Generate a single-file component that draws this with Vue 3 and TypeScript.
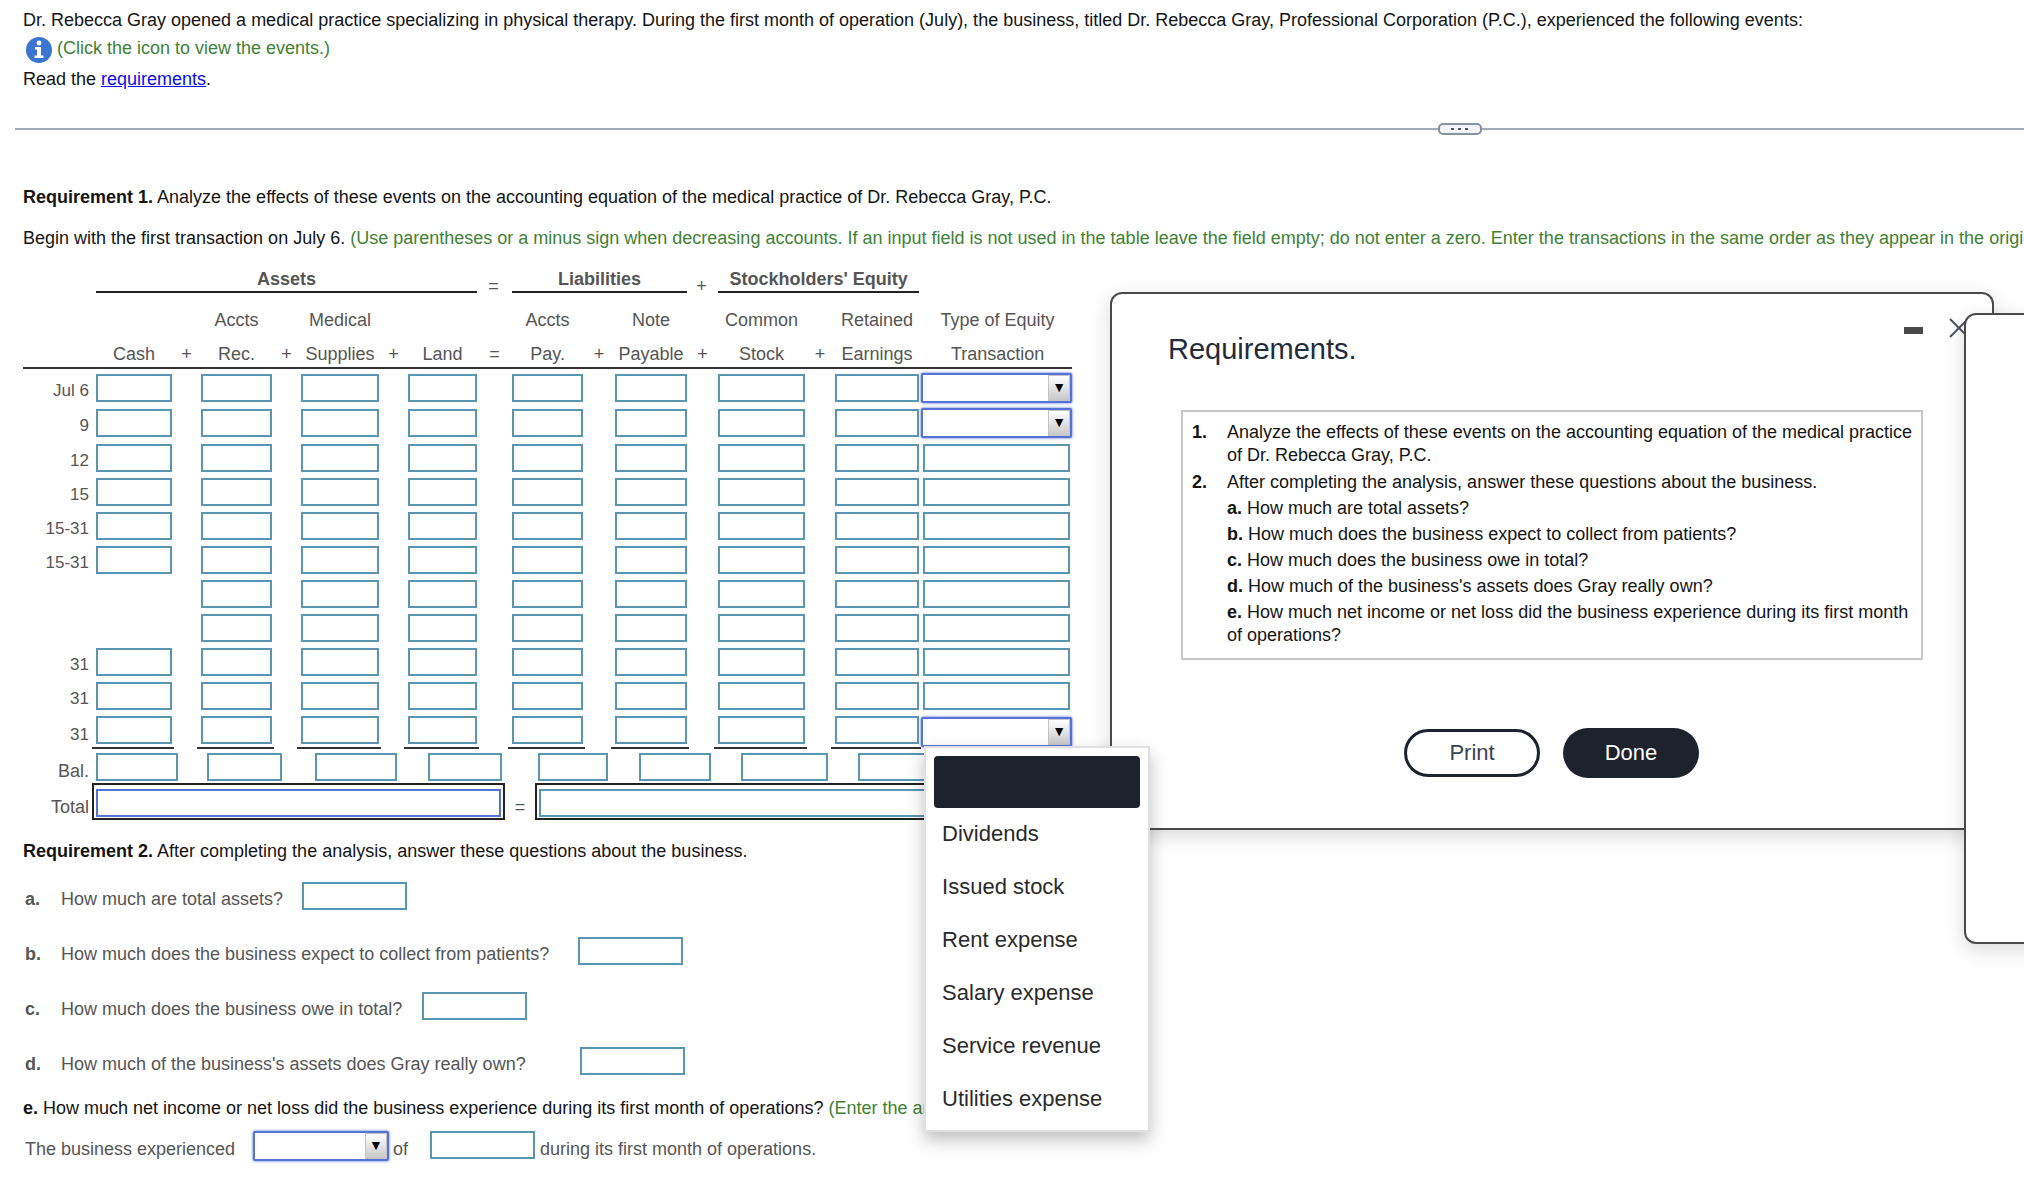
<script setup lang="ts">
import { ref } from 'vue'

interface Account {
  key: string
  top: string
  bottom: string
  op: string
}

interface Entry {
  label: string
  cash: boolean
  pick: boolean
}

interface Question {
  id: string
  text: string
}

const accounts: Account[] = [
  { key: 'cash', top: '', bottom: 'Cash', op: '+' },
  { key: 'rec', top: 'Accts', bottom: 'Rec.', op: '+' },
  { key: 'supplies', top: 'Medical', bottom: 'Supplies', op: '+' },
  { key: 'land', top: '', bottom: 'Land', op: '=' },
  { key: 'pay', top: 'Accts', bottom: 'Pay.', op: '+' },
  { key: 'note', top: 'Note', bottom: 'Payable', op: '+' },
  { key: 'stock', top: 'Common', bottom: 'Stock', op: '+' },
  { key: 'earnings', top: 'Retained', bottom: 'Earnings', op: '' },
]

const entries: Entry[] = [
  { label: 'Jul 6', cash: true, pick: true },
  { label: '9', cash: true, pick: true },
  { label: '12', cash: true, pick: false },
  { label: '15', cash: true, pick: false },
  { label: '15-31', cash: true, pick: false },
  { label: '15-31', cash: true, pick: false },
  { label: '', cash: false, pick: false },
  { label: '', cash: false, pick: false },
  { label: '31', cash: true, pick: false },
  { label: '31', cash: true, pick: false },
  { label: '31', cash: true, pick: true },
]

const options: string[] = [
  '',
  'Dividends',
  'Issued stock',
  'Rent expense',
  'Salary expense',
  'Service revenue',
  'Utilities expense',
]

const questions: Question[] = [
  { id: 'a', text: 'How much are total assets?' },
  { id: 'b', text: 'How much does the business expect to collect from patients?' },
  { id: 'c', text: 'How much does the business owe in total?' },
  { id: 'd', text: "How much of the business's assets does Gray really own?" },
]

const lastRow = entries.length - 1
const openRow = ref<number | null>(lastRow)
const chosen = ref<string[]>(entries.map(() => ''))

function choose(row: number, option: string): void {
  chosen.value[row] = option
  openRow.value = null
}
</script>

<template>
  <main class="page">
    <section class="intro">
      <p>
        Dr. Rebecca Gray opened a medical practice specializing in physical therapy. During the first month of operation (July), the business, titled Dr. Rebecca Gray, Professional Corporation (P.C.), experienced the following events:
      </p>
      <div class="events">
        <button type="button" class="info" aria-label="View the events">
          <svg viewBox="0 0 26 26" width="26" height="26" aria-hidden="true">
            <circle cx="13" cy="13" r="13" fill="#3b74d1" />
            <circle cx="13" cy="6" r="2.4" fill="#fff" />
            <path d="M9 10h6v8.500h2.500v2.500H8.500v-2.500H11v-6H9z" fill="#fff" />
          </svg>
        </button>
        <span class="green">(Click the icon to view the events.)</span>
      </div>
      <p class="read">Read the <a href="#requirements">requirements</a>.</p>
    </section>

    <div class="divider">
      <span class="rule rule-left"></span>
      <button type="button" class="handle" aria-label="Resize"><i></i><i></i><i></i></button>
      <span class="rule rule-right"></span>
    </div>

    <section class="work">
      <p><b>Requirement 1.</b> Analyze the effects of these events on the accounting equation of the medical practice of Dr. Rebecca Gray, P.C.</p>
      <p class="begin">
        Begin with the first transaction on July 6. <span class="green">(Use parentheses or a minus sign when decreasing accounts. If an input field is not used in the table leave the field empty; do not enter a zero. Enter the transactions in the same order as they appear in the original</span>
      </p>

      <table class="ledger">
        <colgroup>
          <col class="w-label" />
          <col class="w-cash" /><col class="w-op1" />
          <col class="w-rec" /><col class="w-op1" />
          <col class="w-supplies" /><col class="w-op1" />
          <col class="w-land" /><col class="w-op2" />
          <col class="w-pay" /><col class="w-op3" />
          <col class="w-note" /><col class="w-op4" />
          <col class="w-stock" /><col class="w-op5" />
          <col class="w-earnings" />
          <col class="w-type" />
        </colgroup>
        <thead>
          <tr class="groups">
            <td></td>
            <th colspan="7"><span>Assets</span></th>
            <td class="op">=</td>
            <th colspan="3"><span>Liabilities</span></th>
            <td class="op">+</td>
            <th colspan="3"><span>Stockholders' Equity</span></th>
            <td></td>
          </tr>
          <tr class="upper">
            <td></td>
            <template v-for="a in accounts" :key="a.key">
              <td>{{ a.top }}</td>
              <td v-if="a.key !== 'earnings'"></td>
            </template>
            <td>Type of Equity</td>
          </tr>
          <tr class="lower">
            <td></td>
            <template v-for="a in accounts" :key="a.key">
              <th scope="col">{{ a.bottom }}</th>
              <td v-if="a.op">{{ a.op }}</td>
            </template>
            <th scope="col">Transaction</th>
          </tr>
        </thead>
        <tbody>
          <tr v-for="(row, r) in entries" :key="r" :class="{ tall: row.pick, last: r === lastRow }">
            <th scope="row">{{ row.label }}</th>
            <template v-for="a in accounts" :key="a.key">
              <td class="amount">
                <input v-if="a.key !== 'cash' || row.cash" type="text" :aria-label="`${row.label} ${a.top} ${a.bottom}`" />
              </td>
              <td v-if="a.key !== 'earnings'"></td>
            </template>
            <td v-if="row.pick" class="type picked">
              <div class="pick">
                <select v-model="chosen[r]" :aria-label="`${row.label} type of equity transaction`" @mousedown.prevent="openRow = openRow === r ? null : r">
                  <option v-for="o in options" :key="o" :value="o">{{ o }}</option>
                </select>
                <span class="arrow" aria-hidden="true">▼</span>
                <ul v-if="openRow === r" class="menu" role="listbox" aria-label="Type of equity transaction">
                  <li
                    v-for="o in options"
                    :key="o"
                    role="option"
                    :class="{ current: o === chosen[r] }"
                    :aria-selected="o === chosen[r]"
                    @click="choose(r, o)"
                  >{{ o }}</li>
                </ul>
              </div>
            </td>
            <td v-else class="type"><input type="text" :aria-label="`${row.label} type of equity transaction`" /></td>
          </tr>
        </tbody>
      </table>

      <table class="sums">
        <colgroup>
          <col class="w-label" />
          <col class="s-cash" /><col class="s-gap1" />
          <col class="s-rec" /><col class="s-gap2" />
          <col class="s-supplies" /><col class="s-gap3" />
          <col class="s-land" /><col class="s-gap4" />
          <col class="s-pay" /><col class="s-gap3" />
          <col class="s-note" /><col class="s-gap4" />
          <col class="s-stock" /><col class="s-gap4" />
          <col class="s-earnings" />
        </colgroup>
        <tbody>
          <tr class="balance">
            <th scope="row">Bal.</th>
            <template v-for="a in accounts" :key="a.key">
              <td :class="a.key"><input type="text" :aria-label="`Balance ${a.top} ${a.bottom}`" /></td>
              <td v-if="a.key !== 'earnings'"></td>
            </template>
          </tr>
          <tr class="total">
            <th scope="row">Total</th>
            <td colspan="7" class="framed"><input type="text" class="active" aria-label="Total assets" /></td>
            <td class="op">=</td>
            <td colspan="7" class="framed"><input type="text" aria-label="Total liabilities and stockholders' equity" /></td>
          </tr>
        </tbody>
      </table>

      <p class="second"><b>Requirement 2.</b> After completing the analysis, answer these questions about the business.</p>

      <div class="questions">
        <div v-for="q in questions" :key="q.id" class="question">
          <b>{{ q.id }}.</b>
          <label :for="`q-${q.id}`" :class="`q-${q.id}`">{{ q.text }}</label>
          <input :id="`q-${q.id}`" type="text" />
        </div>
      </div>

      <p class="income">
        <b>e.</b> How much net income or net loss did the business experience during its first month of operations? <span class="green">(Enter the amount</span>
      </p>
      <div class="sentence">
        <label for="result">The business experienced</label>
        <div class="pick short">
          <select id="result">
            <option value=""></option>
            <option value="income">net income</option>
            <option value="loss">net loss</option>
          </select>
          <span class="arrow" aria-hidden="true">▼</span>
        </div>
        <label for="result-amount" class="of">of</label>
        <input id="result-amount" type="text" />
        <span class="during">during its first month of operations.</span>
      </div>
    </section>

    <section id="requirements" class="dialog requirements" role="dialog" aria-labelledby="req-title">
      <header>
        <h2 id="req-title">Requirements.</h2>
        <div class="controls">
          <button type="button" class="minimize" aria-label="Minimize"><i></i></button>
          <button type="button" class="close" aria-label="Close">
            <svg viewBox="0 0 20 20" width="20" height="20" aria-hidden="true">
              <path d="M1 1L19 19M19 1L1 19" stroke="#4a5460" stroke-width="2" fill="none" />
            </svg>
          </button>
        </div>
      </header>
      <div class="sheet">
        <b>1.</b>
        <p>Analyze the effects of these events on the accounting equation of the medical practice<br />of Dr. Rebecca Gray, P.C.</p>
        <b>2.</b>
        <div class="parts">
          <p>After completing the analysis, answer these questions about the business.</p>
          <p v-for="q in questions" :key="q.id"><b>{{ q.id }}.</b> {{ q.text }}</p>
          <p><b>e.</b> How much net income or net loss did the business experience during its first month<br />of operations?</p>
        </div>
      </div>
      <footer>
        <button type="button" class="print">Print</button>
        <button type="button" class="done">Done</button>
      </footer>
    </section>

    <section class="dialog behind" role="dialog" aria-label="Events"></section>
  </main>
</template>

<style>
body {
  margin: 0;
  background: #fff;
}
</style>

<style scoped>
.page {
  position: relative;
  box-sizing: border-box;
  min-height: 100vh;
  padding-top: 8px;
  overflow: hidden;
  font-family: "Liberation Sans", Arial, sans-serif;
  font-size: 18px;
  line-height: 24px;
  color: #141414;
}

p {
  margin: 0;
  white-space: nowrap;
}

button {
  padding: 0;
  border: 0;
  background: none;
  font: inherit;
}

input,
select {
  box-sizing: border-box;
  margin: 0;
  font: inherit;
}

input {
  display: block;
  width: 100%;
  height: 28px;
  padding: 0 4px;
  border: 2px solid #5a95b1;
  border-radius: 0;
  background: #fff;
  outline: 0;
}

.green {
  color: #3f8135;
}

.intro,
.work {
  padding-left: 23px;
}

.events {
  display: flex;
  align-items: flex-start;
  gap: 5px;
  height: 28px;
  margin-top: 4px;
  padding-left: 3px;
}

.info {
  align-self: center;
  width: 26px;
  height: 26px;
}

.info svg {
  display: block;
}

.read {
  margin-top: 3px;
}

.read a {
  color: #0c0cee;
}

.divider {
  display: flex;
  align-items: center;
  margin-top: 32px;
  padding-left: 15px;
}

.rule {
  height: 2px;
  background: #a3a9b8;
}

.rule-left {
  flex: 21;
}

.rule-right {
  flex: 8;
}

.handle {
  display: flex;
  align-items: center;
  justify-content: center;
  gap: 4px;
  box-sizing: border-box;
  width: 44px;
  height: 12px;
  border: 2px solid #8791a0;
  border-radius: 5px;
  background: #f3f4f7;
}

.handle i {
  width: 3px;
  height: 2px;
  background: #4a5462;
}

.work {
  padding-top: 50px;
}

.begin {
  margin: 17px 0;
}

table {
  border-spacing: 0;
  table-layout: fixed;
  color: #555;
}

th,
td {
  padding: 0;
  font-weight: normal;
  vertical-align: top;
  white-space: nowrap;
}

.ledger {
  width: 1049px;
}

.w-label { width: 69px; }
.w-cash { width: 82px; }
.w-rec { width: 77px; }
.w-supplies { width: 84px; }
.w-land { width: 75px; }
.w-pay { width: 77px; }
.w-note { width: 78px; }
.w-stock { width: 93px; }
.w-earnings { width: 90px; }
.w-type { width: 151px; }
.w-op1 { width: 23px; }
.w-op2 { width: 29px; }
.w-op3 { width: 26px; }
.w-op4 { width: 25px; }
.w-op5 { width: 24px; }

thead th,
thead td {
  text-align: center;
}

.groups th {
  padding: 0 2px 0 4px;
}

.groups span {
  display: block;
  border-bottom: 2px solid #222;
  font-weight: bold;
}

.groups .op {
  padding-top: 12px;
  line-height: 14px;
}

.upper td,
.lower th,
.lower td {
  height: 24px;
  padding: 15px 0 6px 2px;
}

.lower th,
.lower td {
  padding: 4px 0 1px 2px;
  border-bottom: 2px solid #333;
}

tbody th {
  padding: 10px 3px 0 0;
  line-height: 24px;
  text-align: right;
}

.ledger tbody th {
  font-size: 17px;
}

.ledger tbody tr {
  height: 34px;
}

.ledger tbody .tall {
  height: 35px;
}

.ledger tbody .last {
  height: 38px;
}

.amount {
  padding: 5px 2px 0 4px;
}

.last .amount {
  border-bottom: 2px solid #333;
}

.last th {
  padding-top: 12px;
}

.type {
  padding: 5px 2px 0;
}

.picked {
  padding: 4px 0 0;
}

.last .picked {
  padding-top: 6px;
}

.pick {
  position: relative;
  height: 30px;
}

.pick select {
  display: block;
  width: 100%;
  height: 30px;
  padding: 0 24px 0 4px;
  border: 2px solid #5672d4;
  border-radius: 2px;
  background: #fff;
  box-shadow: 0 0 3px #4a69d0;
  outline: 0;
  appearance: none;
}

.arrow {
  position: absolute;
  top: 2px;
  right: 2px;
  box-sizing: border-box;
  width: 22px;
  height: 26px;
  border: 1px solid #c4c4c4;
  background: linear-gradient(#fff, #c8c8c8);
  color: #000;
  font-size: 14px;
  line-height: 23px;
  text-align: center;
  pointer-events: none;
}

.menu {
  position: absolute;
  z-index: 5;
  top: 29px;
  left: 3px;
  width: 206px;
  margin: 0;
  padding: 8px 8px 4px;
  border: 2px solid #e0e0e0;
  background: #fff;
  box-shadow: 0 8px 16px rgba(0, 0, 0, 0.25);
  color: #2a2a2a;
  font-size: 22px;
  list-style: none;
}

.menu li {
  height: 53px;
  padding-left: 8px;
  border-radius: 4px;
  line-height: 51px;
  cursor: pointer;
}

.menu .current {
  height: 52px;
  background: #1e222d;
  color: #fff;
}

.sums {
  width: 920px;
}

.s-cash { width: 86px; }
.s-rec { width: 75px; }
.s-supplies { width: 82px; }
.s-land { width: 77px; }
.s-pay { width: 73px; }
.s-note { width: 72px; }
.s-stock { width: 87px; }
.s-earnings { width: 86px; }
.s-gap1 { width: 29px; }
.s-gap2 { width: 33px; }
.s-gap3 { width: 31px; }
.s-gap4 { width: 30px; }

.balance {
  height: 34px;
}

.balance td {
  padding-top: 4px;
}

.balance .cash {
  padding-left: 4px;
}

.balance .land,
.balance .earnings {
  padding-right: 3px;
}

.balance .pay {
  padding-left: 3px;
}

.total {
  height: 37px;
}

.total th,
.total .op {
  padding-top: 12px;
}

.op {
  text-align: center;
}

.framed {
  padding: 4px 2px 1px;
  border: 2px solid #222;
}

.active {
  border-color: #5672d4;
}

.second {
  margin-top: 19px;
}

.questions {
  display: flex;
  flex-direction: column;
  gap: 25px;
  margin-top: 19px;
  padding-left: 2px;
  color: #555;
}

.question {
  display: flex;
  height: 30px;
}

.question b,
.question label {
  padding-top: 5px;
  white-space: nowrap;
}

.question b {
  width: 36px;
}

.q-a { width: 241px; }
.q-b { width: 517px; }
.q-c { width: 361px; }
.q-d { width: 519px; }

.question input,
.sentence input {
  width: 105px;
}

.income {
  margin-top: 19px;
}

.sentence {
  display: flex;
  margin-top: 11px;
  padding-left: 2px;
  color: #555;
}

.sentence label,
.during {
  padding-top: 6px;
  white-space: nowrap;
}

.sentence label {
  width: 228px;
}

.short {
  width: 136px;
}

.sentence .of {
  width: 37px;
  padding-left: 4px;
}

.during {
  padding-left: 5px;
}

.dialog {
  position: absolute;
  box-sizing: border-box;
  border: 2px solid #4a4a4a;
  border-radius: 12px;
  background: #fff;
  box-shadow: 0 6px 20px rgba(0, 0, 0, 0.15);
}

.requirements {
  z-index: 2;
  top: 292px;
  left: 1110px;
  width: 884px;
  padding: 24px 23px 50px 56px;
}

.requirements header {
  display: flex;
  justify-content: space-between;
}

h2 {
  margin: 14px 0 0;
  color: #252b3a;
  font-size: 29px;
  font-weight: normal;
  line-height: 34px;
}

.controls {
  display: flex;
  gap: 26px;
}

.controls button {
  height: 20px;
}

.minimize {
  display: flex;
  align-items: center;
}

.minimize i {
  width: 19px;
  height: 7px;
  margin-top: 4px;
  background: #4a4a4a;
}

.close svg {
  display: block;
}

.sheet {
  display: grid;
  grid-template-columns: 35px 1fr;
  row-gap: 4px;
  margin: 44px 46px 0 13px;
  padding: 9px 9px 11px;
  border: 2px solid #c6c6c6;
}

.sheet b,
.sheet p {
  line-height: 23px;
}

.parts {
  display: flex;
  flex-direction: column;
  gap: 3px;
}

footer {
  display: flex;
  align-items: center;
  gap: 23px;
  margin-top: 68px;
  padding-left: 236px;
  font-size: 22px;
}

.print,
.done {
  width: 136px;
  height: 50px;
  border-radius: 25px;
}

.print {
  height: 48px;
  border: 3px solid #1e222d;
  color: #3a4254;
}

.done {
  background: #1e222d;
  color: #fff;
}

.behind {
  z-index: 3;
  top: 313px;
  left: 1964px;
  width: 884px;
  height: 631px;
}
</style>
